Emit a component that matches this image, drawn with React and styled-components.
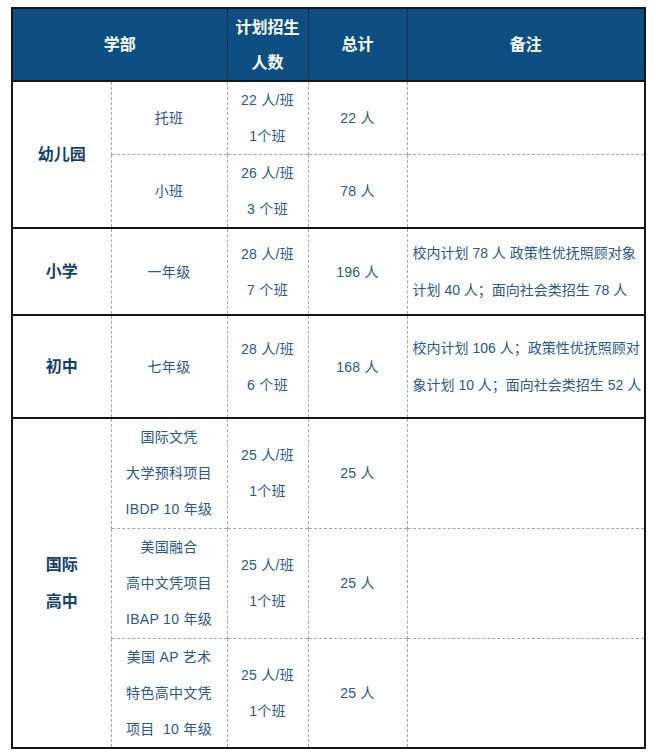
import React from 'react';
import styled, { createGlobalStyle } from 'styled-components';

const GlobalStyle = createGlobalStyle`
  html, body {
    margin: 0;
    padding: 0;
    background: #ffffff;
  }
  body {
    font-family: "Liberation Sans", "Noto Sans CJK SC", sans-serif;
  }
`;

const Page = styled.div`
  width: 656px;
  height: 756px;
  box-sizing: border-box;
  padding: 7px 10px 0 11px;
`;

const Table = styled.table`
  width: 635px;
  border-collapse: collapse;
  table-layout: fixed;
  border: 2px solid #161616;
`;

const HeadCell = styled.th`
  background: #0d4f82;
  color: #ffffff;
  font-size: 16px;
  font-weight: bold;
  line-height: 35px;
  text-align: center;
  vertical-align: middle;
  padding: 0;
  border-left: ${(p) => (p.$first ? 'none' : '1px solid #0a2c48')};
  height: 71px;
`;

const Row = styled.tr`
  height: ${(p) => p.$h}px;
`;

const Cell = styled.td`
  padding: 0;
  font-size: 14px;
  line-height: 36px;
  letter-spacing: 0.3px;
  color: #2b5884;
  text-align: center;
  vertical-align: middle;
  border-left: 1px dashed #a9a9a9;
  border-top: ${(p) => (p.$group ? '2px solid #161616' : '1px dashed #a9a9a9')};
  white-space: pre;
  overflow: hidden;
`;

const NoteCell = styled(Cell)`
  text-align: left;
  padding-left: 5px;
  letter-spacing: 0;
  line-height: 37px;
`;

const GroupCell = styled(Cell)`
  font-size: 16px;
  font-weight: bold;
  letter-spacing: 0;
  color: #163f68;
  border-left: none;
  line-height: 37px;
`;

const Lines = ({ items }) =>
  items.map((t, i) => (
    <React.Fragment key={i}>
      {i > 0 && <br />}
      {t}
    </React.Fragment>
  ));

export default function App() {
  return (
    <Page>
      <GlobalStyle />
      <Table>
        <colgroup>
          <col style={{ width: 99 }} />
          <col style={{ width: 116 }} />
          <col style={{ width: 81 }} />
          <col style={{ width: 99 }} />
          <col />
        </colgroup>
        <thead>
          <tr>
            <HeadCell colSpan={2} $first>学部</HeadCell>
            <HeadCell><Lines items={['计划招生', '人数']} /></HeadCell>
            <HeadCell>总计</HeadCell>
            <HeadCell>备注</HeadCell>
          </tr>
        </thead>
        <tbody>
          <Row $h={73}>
            <GroupCell rowSpan={2} $group>幼儿园</GroupCell>
            <Cell $group>托班</Cell>
            <Cell $group><Lines items={['22 人/班', '1个班']} /></Cell>
            <Cell $group>22 人</Cell>
            <NoteCell $group />
          </Row>
          <Row $h={73}>
            <Cell>小班</Cell>
            <Cell><Lines items={['26 人/班', '3 个班']} /></Cell>
            <Cell>78 人</Cell>
            <NoteCell />
          </Row>
          <Row $h={87}>
            <GroupCell $group>小学</GroupCell>
            <Cell $group>一年级</Cell>
            <Cell $group><Lines items={['28 人/班', '7 个班']} /></Cell>
            <Cell $group>196 人</Cell>
            <NoteCell $group>
              <Lines items={['校内计划 78 人 政策性优抚照顾对象', '计划 40 人；面向社会类招生 78 人']} />
            </NoteCell>
          </Row>
          <Row $h={103}>
            <GroupCell $group>初中</GroupCell>
            <Cell $group>七年级</Cell>
            <Cell $group><Lines items={['28 人/班', '6 个班']} /></Cell>
            <Cell $group>168 人</Cell>
            <NoteCell $group>
              <Lines items={['校内计划 106 人；政策性优抚照顾对', '象计划 10 人；面向社会类招生 52 人']} />
            </NoteCell>
          </Row>
          <Row $h={110}>
            <GroupCell rowSpan={3} $group><Lines items={['国际', '高中']} /></GroupCell>
            <Cell $group><Lines items={['国际文凭', '大学预科项目', 'IBDP 10 年级']} /></Cell>
            <Cell $group><Lines items={['25 人/班', '1个班']} /></Cell>
            <Cell $group>25 人</Cell>
            <NoteCell $group />
          </Row>
          <Row $h={110}>
            <Cell><Lines items={['美国融合', '高中文凭项目', 'IBAP 10 年级']} /></Cell>
            <Cell><Lines items={['25 人/班', '1个班']} /></Cell>
            <Cell>25 人</Cell>
            <NoteCell />
          </Row>
          <Row $h={109}>
            <Cell><Lines items={['美国 AP 艺术', '特色高中文凭', '项目  10 年级']} /></Cell>
            <Cell><Lines items={['25 人/班', '1个班']} /></Cell>
            <Cell>25 人</Cell>
            <NoteCell />
          </Row>
        </tbody>
      </Table>
    </Page>
  );
}
